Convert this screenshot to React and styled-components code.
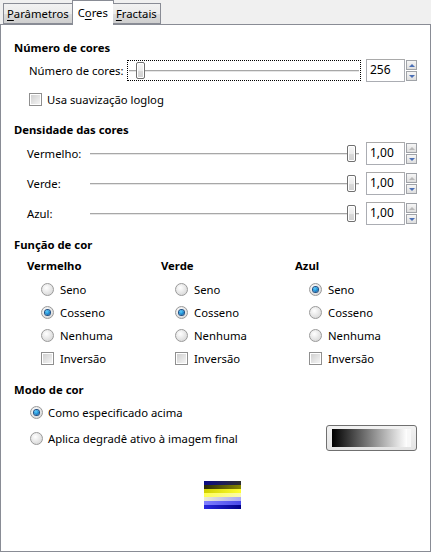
import React from 'react';
import styled, { createGlobalStyle } from 'styled-components';

const GlobalStyle = createGlobalStyle`
  html, body {
    margin: 0;
    padding: 0;
    background: #f0f0f0;
  }
  body {
    font-family: "Noto Sans", "Open Sans", sans-serif;
    font-size: 11.3px;
    color: #000;
  }
`;

const Window = styled.div`
  width: 431px;
  height: 552px;
  display: flex;
  flex-direction: column;
  background: #f0f0f0;
`;

const TabBar = styled.div`
  height: 24px;
  display: flex;
  align-items: flex-end;
  padding-left: 3px;
  position: relative;
  z-index: 1;
`;

const Tab = styled.div`
  box-sizing: border-box;
  height: ${p => (p.$active ? '25px' : '21px')};
  margin-bottom: ${p => (p.$active ? '-1px' : '0')};
  margin-left: ${p => (p.$active ? '-1px' : '0')};
  margin-right: ${p => (p.$active ? '-1px' : '0')};
  padding: ${p => (p.$active ? '3px 5px 0' : '1px 3px 0')};
  border: 1px solid #898c95;
  border-bottom: ${p => (p.$active ? 'none' : '1px solid #898c95')};
  border-left: ${p => (p.$first || p.$active ? '1px solid #898c95' : 'none')};
  background: ${p => (p.$active ? '#fff' : 'linear-gradient(#f2f2f2, #ebebeb 50%, #dddddd 51%, #cfcfcf)')};
  line-height: 17px;
  font-size: 11.3px;
  color: #000;
  position: relative;

  u {
    text-decoration: underline;
    text-underline-offset: 2px;
  }
`;

const Panel = styled.div`
  flex: 1;
  background: #fff;
  border: 1px solid #898c95;
  display: flex;
  flex-direction: column;
  padding: 15px 13px 0 13px;
`;

const Heading = styled.div`
  font-weight: bold;
  height: 16px;
  line-height: 16px;
  margin-top: ${p => p.$top || 0}px;
`;

const Body = styled.div`
  display: flex;
  flex-direction: column;
  gap: ${p => p.$gap || 0}px;
  padding-left: ${p => p.$indent || 14}px;
  margin-top: ${p => p.$top || 0}px;
`;

const SliderRow = styled.div`
  display: flex;
  align-items: center;
  height: 23px;
`;

const RowLabel = styled.div`
  width: ${p => p.$width}px;
  flex-shrink: 0;
  white-space: nowrap;
`;

const SliderBox = styled.div`
  flex: 1;
  height: 21px;
  box-sizing: border-box;
  border: 1px dotted ${p => (p.$focused ? '#000' : 'transparent')};
  position: relative;
  margin-right: 5px;
`;

const Track = styled.div`
  position: absolute;
  left: ${p => p.$inset}px;
  right: ${p => p.$inset}px;
  top: 9px;
  height: 1px;
  background: #a7a7a7;
  border-bottom: 1px solid #e6e6e6;
`;

const Thumb = styled.div`
  position: absolute;
  top: 1px;
  width: 9px;
  height: 17px;
  box-sizing: border-box;
  border: 1px solid #707070;
  border-radius: 2px;
  background: linear-gradient(#f7f7f7, #ebebeb 50%, #dbdbdb 51%, #d0d0d0);
  box-shadow: inset 0 0 0 1px #fff;
`;

const Spin = styled.div`
  display: flex;
  height: 23px;
`;

const Entry = styled.div`
  box-sizing: border-box;
  width: 39px;
  height: 23px;
  border: 1px solid #abadb3;
  border-top-color: #a9a9a9;
  padding-left: 3px;
  line-height: 20px;
  font-size: 12px;
  color: #000;
`;

const SpinButtons = styled.div`
  display: flex;
  flex-direction: column;
  gap: 1px;
  margin-left: 1px;
  padding-top: 1px;
`;

const SpinButton = styled.div`
  box-sizing: border-box;
  width: 11px;
  height: 10px;
  border: 1px solid #a0a3a8;
  background: linear-gradient(#f6f6f6, #dedede);
  display: flex;
  align-items: center;
  justify-content: center;

  &::after {
    content: '';
    border-left: 3px solid transparent;
    border-right: 3px solid transparent;
    ${p => (p.$up
      ? `border-bottom: 3px solid ${p.$disabled ? '#b8b8b8' : '#4a6fb5'};`
      : `border-top: 3px solid ${p.$disabled ? '#b8b8b8' : '#4a6fb5'};`)}
  }
`;

const CheckRow = styled.label`
  display: flex;
  align-items: center;
  gap: ${p => p.$gap || 6}px;
  height: ${p => p.$height || 23}px;
  white-space: nowrap;
`;

const Checkbox = styled.span`
  box-sizing: border-box;
  width: 13px;
  height: 13px;
  border: 1px solid #8f8f8f;
  background: #fff;
  padding: 1px;
  flex-shrink: 0;

  &::after {
    content: '';
    display: block;
    width: 9px;
    height: 9px;
    background: linear-gradient(135deg, #d0d0d0, #f4f4f4);
  }
`;

const Radio = styled.span`
  box-sizing: border-box;
  width: 13px;
  height: 13px;
  border-radius: 50%;
  border: 1px solid #9a9a9a;
  background: radial-gradient(circle at 40% 35%, #ffffff, #e2e2e2 60%, #cfcfcf);
  flex-shrink: 0;
  display: flex;
  align-items: center;
  justify-content: center;

  &::after {
    content: '';
    display: ${p => (p.$checked ? 'block' : 'none')};
    width: 5px;
    height: 5px;
    border-radius: 50%;
    background: radial-gradient(circle at 40% 35%, #5fd0ff, #1a8ad0 55%, #0a3a78);
    box-shadow: 0 0 0 1px #1f4f84;
  }
`;

const Columns = styled.div`
  display: grid;
  grid-template-columns: 134px 134px 134px;
  padding-left: 13px;
  margin-top: 5px;
`;

const Column = styled.div`
  display: flex;
  flex-direction: column;
`;

const ColumnTitle = styled.div`
  font-weight: bold;
  height: 16px;
  line-height: 16px;
  margin-bottom: 4px;
`;

const ColumnOptions = styled.div`
  display: flex;
  flex-direction: column;
  padding-left: 14px;
`;

const ModeRow = styled.div`
  display: flex;
  align-items: center;
  justify-content: space-between;
  height: ${p => p.$height || 22}px;
`;

const GradientButton = styled.div`
  box-sizing: border-box;
  width: 91px;
  height: 26px;
  border: 1px solid #707070;
  border-radius: 3px;
  background: linear-gradient(#f2f2f2, #e4e4e4);
  padding: 3px 5px;
  display: flex;
`;

const GradientBar = styled.div`
  flex: 1;
  background: linear-gradient(to right, #000, #fff);
  border-right: 4px solid #f8f8f8;
`;

const PreviewWrap = styled.div`
  display: flex;
  justify-content: center;
  padding-left: 14px;
  margin-top: 30px;
`;

const Preview = styled.div`
  width: 37px;
  height: 28px;
  display: flex;
  flex-direction: column;
`;

const Band = styled.div`
  height: 4px;
  background: linear-gradient(to right, ${p => p.$from}, ${p => p.$to});
`;

const bands = [
  ['#0b0b86', '#2e2e2e'],
  ['#2a2a08', '#8a8a00'],
  ['#d0d000', '#ffff30'],
  ['#ffff50', '#fafab0'],
  ['#ececd0', '#a8a8f8'],
  ['#8080ff', '#4848e8'],
  ['#2828e0', '#000088'],
];

const density = ['Vermelho:', 'Verde:', 'Azul:'];

const columns = [
  { title: 'Vermelho', checked: 'Cosseno' },
  { title: 'Verde', checked: 'Cosseno' },
  { title: 'Azul', checked: 'Seno' },
];

const SpinBox = ({ value, atMax }) => (
  <Spin>
    <Entry>{value}</Entry>
    <SpinButtons>
      <SpinButton $up $disabled={atMax} />
      <SpinButton />
    </SpinButtons>
  </Spin>
);

export default function App() {
  return (
    <>
      <GlobalStyle />
      <Window>
        <TabBar>
          <Tab $first><u>P</u>arâmetros</Tab>
          <Tab $active>C<u>o</u>res</Tab>
          <Tab><u>F</u>ractais</Tab>
        </TabBar>
        <Panel>
          <Heading>Número de cores</Heading>
          <Body $indent={15} $top={3}>
            <SliderRow>
              <RowLabel $width={98}>Número de cores:</RowLabel>
              <SliderBox $focused>
                <Track $inset={1} />
                <Thumb style={{ left: '8px' }} />
              </SliderBox>
              <SpinBox value="256" />
            </SliderRow>
            <CheckRow $gap={5} $height={18} style={{ marginTop: '8px' }}>
              <Checkbox />
              Usa suavização loglog
            </CheckRow>
          </Body>

          <Heading $top={14}>Densidade das cores</Heading>
          <Body $indent={13} $top={4} $gap={7}>
            {density.map(label => (
              <SliderRow key={label}>
                <RowLabel $width={61}>{label}</RowLabel>
                <SliderBox>
                  <Track $inset={1} />
                  <Thumb style={{ right: '4px' }} />
                </SliderBox>
                <SpinBox value="1,00" atMax />
              </SliderRow>
            ))}
          </Body>

          <Heading $top={12}>Função de cor</Heading>
          <Columns>
            {columns.map(col => (
              <Column key={col.title}>
                <ColumnTitle>{col.title}</ColumnTitle>
                <ColumnOptions>
                  {['Seno', 'Cosseno', 'Nenhuma'].map(opt => (
                    <CheckRow key={opt}>
                      <Radio $checked={opt === col.checked} />
                      {opt}
                    </CheckRow>
                  ))}
                  <CheckRow>
                    <Checkbox />
                    Inversão
                  </CheckRow>
                </ColumnOptions>
              </Column>
            ))}
          </Columns>

          <Heading $top={12}>Modo de cor</Heading>
          <Body $indent={16} $top={3} $gap={2}>
            <ModeRow>
              <CheckRow $gap={5} $height={22}>
                <Radio $checked />
                Como especificado acima
              </CheckRow>
            </ModeRow>
            <ModeRow $height={26}>
              <CheckRow $gap={5} $height={22}>
                <Radio />
                Aplica degradê ativo à imagem final
              </CheckRow>
              <GradientButton>
                <GradientBar />
              </GradientButton>
            </ModeRow>
          </Body>

          <PreviewWrap>
            <Preview>
              {bands.map(([from, to], i) => (
                <Band key={i} $from={from} $to={to} />
              ))}
            </Preview>
          </PreviewWrap>
        </Panel>
      </Window>
    </>
  );
}
